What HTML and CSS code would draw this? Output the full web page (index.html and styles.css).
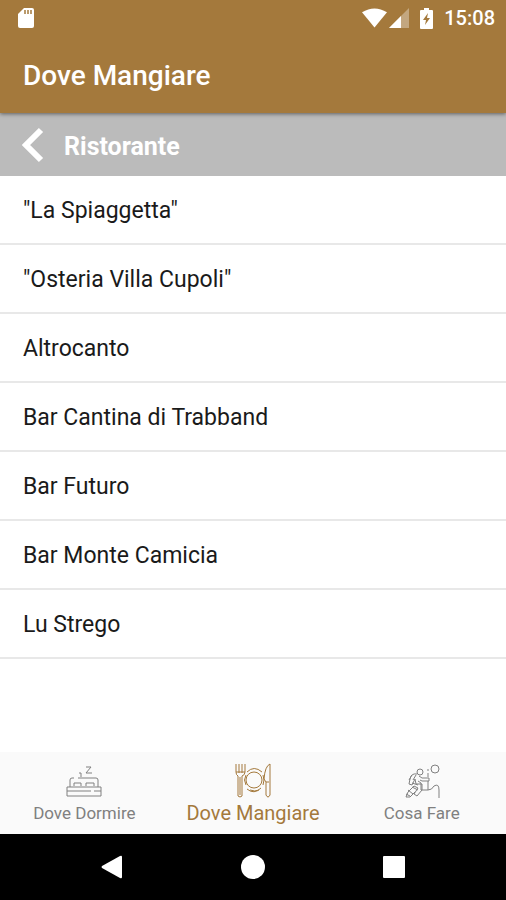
FILE: index.html
```html
<!DOCTYPE html>
<html lang="it">
<head>
<meta charset="utf-8">
<meta name="viewport" content="width=device-width, initial-scale=1">
<title>Dove Mangiare</title>
<link rel="stylesheet" href="styles.css">
</head>
<body>
<header class="top">
  <div class="status">
    <svg class="sd" width="16" height="20" viewBox="0 0 16 20" aria-hidden="true"><path fill="#fff" d="M6 0h8q2 0 2 2v16q0 2-2 2H2q-2 0-2-2V6z"/><path stroke="#a4793c" stroke-width="1.500" d="M7 2v4M10 2v4M13 2v4"/></svg>
    <svg width="25" height="20" viewBox="0 0 26 20" aria-hidden="true"><path fill="#fff" d="M0 4q13-8 26 0L13 20z"/></svg>
    <svg class="signal" width="20" height="20" viewBox="0 0 20 20" aria-hidden="true"><path fill="#fff" fill-opacity=".35" d="M20 0v20H0z"/><path fill="#fff" d="M12 8v12H0z"/></svg>
    <svg class="battery" width="13" height="21" viewBox="0 0 13 21" aria-hidden="true"><path fill="#fff" d="M4 0h5v2h3q1 0 1 1v17q0 1-1 1H1q-1 0-1-1V3q0-1 1-1h3z"/><path fill="#a4793c" d="M8 5l-5 7h3l-1 5 5-7H7z"/></svg>
    <time>15:08</time>
  </div>
  <h1>Dove Mangiare</h1>
</header>
<div class="category">
  <button type="button" aria-label="Indietro"><svg width="22" height="36" viewBox="0 0 22 36"><path fill="none" stroke="#fff" stroke-width="6" d="M19 3L4 18l15 15"/></svg></button>
  <h2>Ristorante</h2>
</div>
<main>
  <ul class="places">
    <li><a href="#">"La Spiaggetta"</a></li>
    <li><a href="#">"Osteria Villa Cupoli"</a></li>
    <li><a href="#">Altrocanto</a></li>
    <li><a href="#">Bar Cantina di Trabband</a></li>
    <li><a href="#">Bar Futuro</a></li>
    <li><a href="#">Bar Monte Camicia</a></li>
    <li><a href="#">Lu Strego</a></li>
  </ul>
</main>
<nav class="tabs">
  <a href="#">
    <svg width="36" height="36" viewBox="0 0 36 36" aria-hidden="true"><path d="M4 24v-7q0-2 2-2h2M12 15h18q2 0 2 2v7M1 24h34v9H1zM1 28h24M28 28h7M8 23v-3h7v3M20 23v-3h8v3M13 10h2v4M20 4h5l-5 6h6"/></svg>
    <span>Dove Dormire</span>
  </a>
  <a href="#" class="active" aria-current="page">
    <svg width="36" height="36" viewBox="0 0 36 36" aria-hidden="true"><path d="M1 1v8q0 3 2 4v20q2 2 4 0V13q3-1 3-4V1M4 1v9M7 1v9M1 9h9M5 14v18M12 9q7-7 15 0M11 12q-3 5 0 10M12 26q7 6 14-1M28 12q2 5 0 10M15 27q5 2 9 0M35 1q-5 2-6 15l2 3v13q2 4 4 0zM31 19h3"/><circle cx="19" cy="17" r="8"/></svg>
    <span>Dove Mangiare</span>
  </a>
  <a href="#">
    <svg width="36" height="36" viewBox="0 0 36 36" aria-hidden="true"><circle cx="16" cy="9" r="3"/><circle cx="31" cy="6" r="4"/><path d="M13 11q-6-1-7 5l-1 5 3 1 3-6 1 5h6v6l-5 6-3-2 4-6-4-2-6 6-2 5h4l5-5M15 13l3 2h7v3h-7l-2-1M14 18l3 2v7M8 20l6 2M8 24l6 3M4 27l5 4M24 10v4M24 18v9M17 27h7q4 0 6-4 5-3 5 4v8M23 7h2M2 31l4 2M8 12l-3 5M9 17l3-5"/></svg>
    <span>Cosa Fare</span>
  </a>
</nav>
<footer class="system">
  <button type="button" aria-label="Indietro"><svg width="24" height="24" viewBox="0 0 24 24"><path d="M2 11L20 1q2-1 2 1v20q0 2-2 1L2 13q-1-1 0-2z"/></svg></button>
  <button type="button" aria-label="Home"><svg width="24" height="24" viewBox="0 0 24 24"><circle cx="12" cy="12" r="12"/></svg></button>
  <button type="button" aria-label="Recenti"><svg width="24" height="24" viewBox="0 0 24 24"><rect x="1" y="1" width="22" height="22" rx="1"/></svg></button>
</footer>
</body>
</html>
```
FILE: styles.css
```css
* {
  box-sizing: border-box;
}

body {
  display: flex;
  flex-direction: column;
  min-height: 100vh;
  margin: 0;
  background: #fff;
  color: #1a1a1a;
  font-family: Roboto, sans-serif;
}

h1, h2, ul {
  margin: 0;
  padding: 0;
}

a {
  color: inherit;
  text-decoration: none;
}

button {
  display: flex;
  padding: 0;
  border: 0;
  background: none;
}

.top {
  z-index: 1;
  background: #a4793c;
  color: #fff;
  box-shadow: 0 1px 4px rgba(0, 0, 0, .5);
}

.status {
  display: flex;
  align-items: center;
  height: 36px;
  padding: 0 11px 0 18px;
}

.sd {
  margin-right: auto;
}

.signal {
  margin-left: 2px;
}

.battery {
  margin: 0 11px;
}

.status time {
  font-size: 20px;
  font-weight: 500;
}

h1 {
  padding: 2px 23px 0;
  font-size: 28px;
  font-weight: 500;
  line-height: 75px;
}

.category {
  display: flex;
  align-items: center;
  gap: 20px;
  height: 63px;
  padding: 0 22px;
  background: #bbb;
  color: #fff;
}

h2 {
  padding-top: 3px;
  font-size: 25px;
  font-weight: 700;
}

main {
  flex: 1;
}

.places {
  list-style: none;
}

.places a {
  display: block;
  padding: 2px 23px 0;
  border-bottom: 2px solid #e8e8e8;
  font-size: 23px;
  line-height: 65px;
}

.tabs {
  display: grid;
  grid-template-columns: repeat(3, 1fr);
  height: 82px;
  background: #fafafa;
  color: #808080;
}

.tabs a {
  display: flex;
  flex-direction: column;
  align-items: center;
  padding-top: 11px;
  font-size: 17px;
  line-height: 28px;
}

.tabs svg {
  fill: none;
  stroke: currentColor;
  stroke-width: 1;
}

.tabs .active {
  color: #a4793c;
  font-size: 20px;
}

.system {
  display: flex;
  justify-content: center;
  align-items: center;
  gap: 117px;
  height: 66px;
  background: #000;
}

.system svg {
  fill: #fff;
}
```
